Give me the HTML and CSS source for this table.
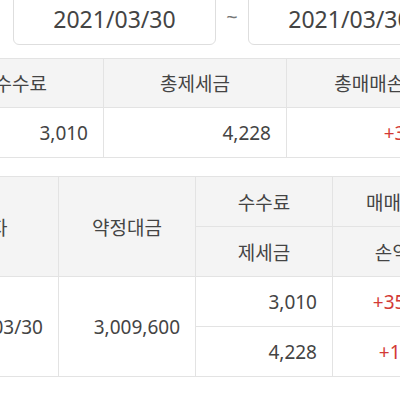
FILE: index.html
```html
<!DOCTYPE html>
<html lang="ko">
<head>
<meta charset="utf-8">
<link rel="stylesheet" href="styles.css">
</head>
<body>
<div class="page">
  <div class="dates">
    <div class="date-box">2021/03/30</div>
    <span class="tilde">~</span>
    <div class="date-box">2021/03/30</div>
  </div>

  <table class="grid summary">
    <colgroup><col><col><col></colgroup>
    <thead>
      <tr><th>총수수료</th><th>총제세금</th><th>총매매손익</th></tr>
    </thead>
    <tbody>
      <tr><td>3,010</td><td>4,228</td><td class="up">+35,216</td></tr>
    </tbody>
  </table>

  <table class="grid detail">
    <colgroup><col><col><col><col></colgroup>
    <thead>
      <tr><th rowspan="2">일자</th><th rowspan="2">약정대금</th><th>수수료</th><th>매매손익</th></tr>
      <tr><th>제세금</th><th>손익률</th></tr>
    </thead>
    <tbody>
      <tr><td rowspan="2">2021/03/30</td><td rowspan="2">3,009,600</td><td>3,010</td><td class="up">+352,162</td></tr>
      <tr><td>4,228</td><td class="up">+11.71%</td></tr>
    </tbody>
  </table>
</div>
</body>
</html>
```

FILE: styles.css
```css
html, body {
  margin: 0;
  padding: 0;
  background: #ffffff;
  overflow: hidden;
}

body {
  font-family: "Noto Sans", "Noto Sans CJK KR", sans-serif;
  color: #444444;
}

.page {
  width: 400px;
  height: 400px;
  overflow: hidden;
}

.dates {
  display: flex;
  align-items: center;
  margin-top: -7px;
  padding-left: 13px;
  height: 52px;
}

.date-box {
  flex: 0 0 203px;
  box-sizing: border-box;
  height: 52px;
  border: 1px solid #dedede;
  border-radius: 6px;
  display: flex;
  align-items: center;
  justify-content: center;
  font-size: 23px;
  color: #444444;
}

.tilde {
  flex: 0 0 32px;
  text-align: center;
  font-size: 20px;
  color: #777777;
  line-height: 1;
  padding-bottom: 4px;
}

.grid {
  border-collapse: collapse;
  table-layout: fixed;
  font-size: 19px;
}

.grid th,
.grid td {
  border: 1px solid #e3e3e3;
  padding: 0 15px;
  white-space: nowrap;
  overflow: hidden;
}

.grid th {
  background: #f4f4f4;
  font-weight: normal;
  text-align: center;
  color: #444444;
}

.grid td {
  text-align: right;
}

.grid .up {
  color: #d33a36;
}

.summary {
  margin-top: 13px;
  margin-left: -80px;
  width: 549px;
}

.summary col {
  width: 183px;
}

.summary th {
  height: 48px;
}

.summary td {
  height: 49px;
}

.detail {
  margin-top: 18px;
  margin-left: -79px;
  width: 548px;
}

.detail col {
  width: 137px;
}

.detail th {
  height: 49px;
}

.detail td {
  height: 49px;
}
```
